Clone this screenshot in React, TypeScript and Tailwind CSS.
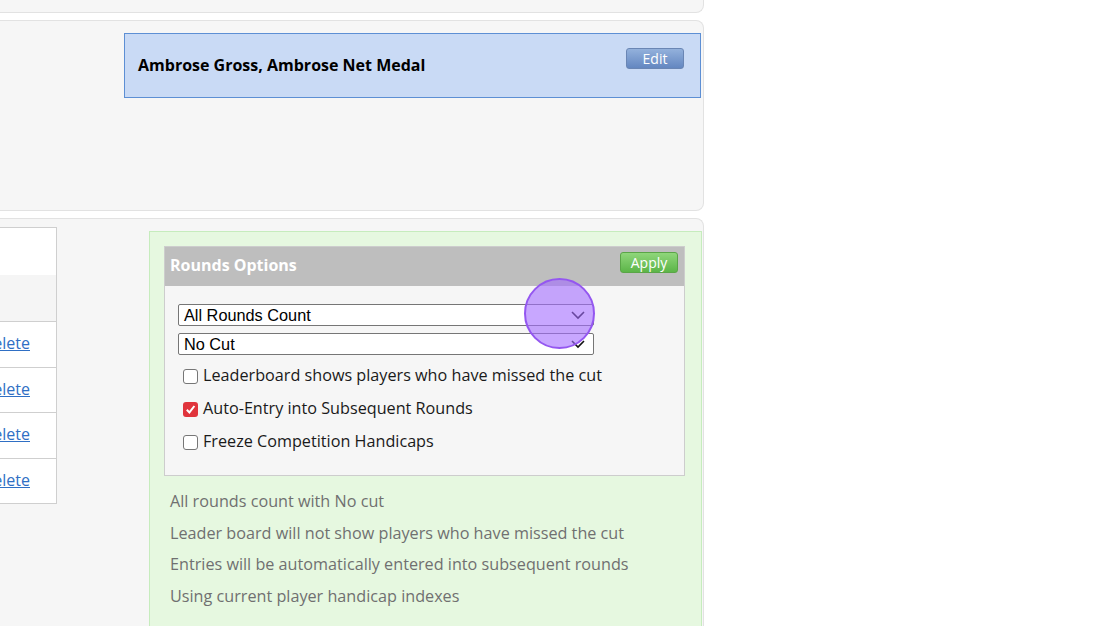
import React from "react";

const sans = "font-['Open_Sans',sans-serif]";

function Chevron() {
	return (
		<svg width="16" height="10" viewBox="0 0 16 10" className="shrink-0">
			<path d="M2 2 L8 8 L14 2" fill="none" stroke="#111" strokeWidth="1.6" />
		</svg>
	);
}

function FakeSelect({ label }: { label: string }) {
	return (
		<div className="flex h-[22px] w-[416px] items-center justify-between rounded-[2px] border border-[#767676] bg-white pl-[5px] pr-[7px] font-['Liberation_Sans',Arial,sans-serif] text-[16.3px] leading-none text-black">
			<span>{label}</span>
			<Chevron />
		</div>
	);
}

function Check({ checked, label }: { checked?: boolean; label: string }) {
	return (
		<label className="flex h-[33px] items-center gap-[5px] pl-[5px] text-[16.2px] text-[#1a1a1a]">
			{checked ? (
				<span className="flex h-[15px] w-[15px] items-center justify-center rounded-[3px] bg-[#e0343c]">
					<svg width="11" height="11" viewBox="0 0 11 11">
						<path d="M1.8 5.8 L4.4 8.4 L9.4 2" fill="none" stroke="#fff" strokeWidth="2" />
					</svg>
				</span>
			) : (
				<span className="h-[15px] w-[15px] rounded-[3px] border border-[#767676] bg-white" />
			)}
			<span className="-mt-[2px]">{label}</span>
		</label>
	);
}

export default function App() {
	const notes = [
		"All rounds count with No cut",
		"Leader board will not show players who have missed the cut",
		"Entries will be automatically entered into subsequent rounds",
		"Using current player handicap indexes",
	];

	return (
		<div className={`relative h-[626px] w-[1120px] overflow-hidden bg-white ${sans}`}>
			<div className="-ml-[100px] flex w-[804px] flex-col">
				<div className="h-[13px] rounded-br-[8px] border-r border-b border-[#e2e2e2] bg-[#f6f6f6]" />

				<div className="mt-[7px] h-[191px] rounded-r-[8px] border border-l-0 border-[#e2e2e2] bg-[#f6f6f6] pt-[12px]">
					<div className="ml-[224px] flex h-[65px] w-[577px] items-start justify-between border border-[#5d8fd4] bg-[#c9daf5] pl-[13px] pr-[16px]">
						<span className="mt-[19px] text-[16px] font-bold text-black">
							Ambrose Gross, Ambrose Net Medal
						</span>
						<button className="mt-[14px] h-[21px] w-[58px] rounded-[3px] border border-[#6a86b4] bg-gradient-to-b from-[#93b1dc] to-[#6487c0] text-[14px] leading-none text-white">
							Edit
						</button>
					</div>
				</div>

				<div className="mt-[7px] flex h-[420px] items-start rounded-tr-[8px] border border-l-0 border-b-0 border-[#e2e2e2] bg-[#f6f6f6]">
					<div className="mt-[8px] w-[157px] border border-l-0 border-[#cfcfcf] bg-white">
						<div className="h-[47px]" />
						<div className="h-[46px] bg-[#f5f5f5]" />
						{[0, 1, 2, 3].map((i) => (
							<div
								key={i}
								className="flex h-[45.5px] items-center justify-end border-t border-[#cfcfcf] pr-[26px]"
							>
								<a className="-mt-[2px] text-[16px] text-[#2f6fc4] underline">Delete</a>
							</div>
						))}
					</div>

					<div className="mt-[12px] ml-[92px] flex h-[420px] w-[553px] flex-col border border-[#c6ecbd] bg-[#e6f8e0] pt-[14px] pl-[14px] pr-[16px]">
						<div className="border border-[#cdcdcd] bg-[#f6f6f6]">
							<div className="flex h-[39px] items-start justify-between bg-[#bebebe] pl-[5px] pr-[6px]">
								<span className="mt-[6px] text-[16px] font-bold text-white">Rounds Options</span>
								<button className="mt-[5px] h-[21px] w-[58px] rounded-[3px] border border-[#5aa547] bg-gradient-to-b from-[#8fd67a] to-[#5cb548] text-[14px] leading-none text-white">
									Apply
								</button>
							</div>
							<div className="flex flex-col pt-[18px] pl-[13px] pb-[16px]">
								<FakeSelect label="All Rounds Count" />
								<div className="mt-[7px]">
									<FakeSelect label="No Cut" />
								</div>
								<div className="mt-[5px] flex flex-col">
									<Check label="Leaderboard shows players who have missed the cut" />
									<Check checked label="Auto-Entry into Subsequent Rounds" />
									<Check label="Freeze Competition Handicaps" />
								</div>
							</div>
						</div>
						<div className="mt-[10px] flex flex-col pl-[6px]">
							{notes.map((n) => (
								<p key={n} className="h-[31.5px] text-[16.2px] leading-[31.5px] text-[#707070]">
									{n}
								</p>
							))}
						</div>
					</div>
				</div>
			</div>

			<div className="absolute left-[524px] top-[278px] h-[71px] w-[71px] rounded-full border-2 border-[#9457f0] bg-[#a46cff]/60" />
		</div>
	);
}
